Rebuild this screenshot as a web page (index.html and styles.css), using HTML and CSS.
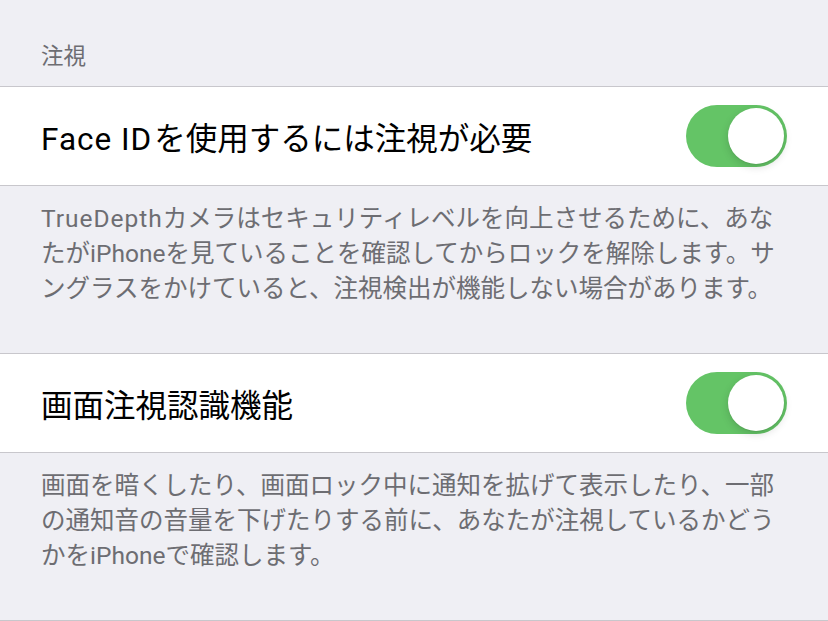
FILE: index.html
```html
<!DOCTYPE html>
<html lang="ja">
<head>
    <meta charset="UTF-8">
    <meta name="viewport" content="width=device-width, initial-scale=1.0">
    <title>注視</title>
    <link rel="stylesheet" href="styles.css">
</head>
<body>
    <div class="settings">
        <div class="group-header">注視</div>

        <div class="row">
            <span class="row-title"><span class="latin">Face ID</span>を使用するには注視が必要</span>
            <div class="switch on"><div class="knob"></div></div>
        </div>
        <div class="group-footer">
            <span class="latin">TrueDepth</span>カメラはセキュリティレベルを向上させるために、あな<br>たがiPhoneを見ていることを確認してからロックを解除します。サ<br>ングラスをかけていると、注視検出が機能しない場合があります。
        </div>

        <div class="row">
            <span class="row-title">画面注視認識機能</span>
            <div class="switch on"><div class="knob"></div></div>
        </div>
        <div class="group-footer">
            画面を暗くしたり、画面ロック中に通知を拡げて表示したり、一部<br>の通知音の音量を下げたりする前に、あなたが注視しているかどう<br>かをiPhoneで確認します。
        </div>

        <div class="divider"></div>
    </div>
</body>
</html>
```

FILE: styles.css
```css
body {
    margin: 0;
    background-color: #efeff4;
    font-family: Roboto, "Noto Sans CJK JP", sans-serif;
}

.settings {
    width: 828px;
}

.group-header {
    height: 86px;
    box-sizing: border-box;
    padding: 41px 41px 0;
    font-size: 22.5px;
    line-height: 30px;
    color: #6d6d72;
}

.row {
    display: flex;
    align-items: center;
    justify-content: space-between;
    height: 98px;
    padding: 0 41px;
    background-color: #fff;
    border-top: 1px solid #c8c7cc;
    border-bottom: 1px solid #c8c7cc;
}

.row-title {
    font-size: 31.5px;
    color: #000;
}

.latin {
    letter-spacing: 1px;
}

.row-title .latin {
    margin-right: 2px;
}

.group-footer {
    height: 167px;
    box-sizing: border-box;
    padding: 15px 41px 0;
    font-size: 24.5px;
    line-height: 35px;
    color: #6d6d72;
}

.divider {
    border-top: 1px solid #c8c7cc;
}

.switch {
    width: 101px;
    height: 62px;
    border-radius: 31px;
    background-color: #e9e9ea;
    position: relative;
}

.switch.on {
    background-color: #64c466;
}

.knob {
    width: 56px;
    height: 56px;
    border-radius: 50%;
    background-color: #fff;
    position: absolute;
    top: 3px;
    left: 3px;
    box-shadow: 0 3px 8px rgba(0, 0, 0, 0.15), 0 1px 1px rgba(0, 0, 0, 0.06);
}

.switch.on .knob {
    left: 42px;
}
```
